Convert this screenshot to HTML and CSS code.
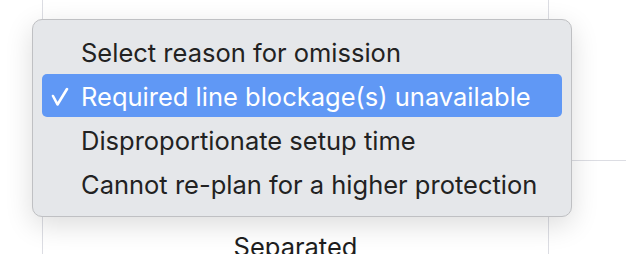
FILE: index.html
```html
<!DOCTYPE html>
<html lang="en">
<head>
  <meta charset="UTF-8">
  <title>Omission reason</title>
  <link rel="stylesheet" href="styles.css">
</head>
<body>
  <div class="table">
    <div class="col col-left"></div>
    <div class="col col-main">
      <div class="cell cell-top"></div>
      <div class="cell cell-label">Separated</div>
    </div>
    <div class="col col-right">
      <div class="cell cell-top"></div>
      <div class="cell"></div>
    </div>
  </div>

  <ul class="menu">
    <li class="option">Select reason for omission</li>
    <li class="option selected">
      <svg class="check" width="18" height="19" viewBox="0 0 18 19">
        <path d="M2 9 L6.5 17.5 L16 2" fill="none" stroke="#fff" stroke-width="2.6" stroke-linecap="round" stroke-linejoin="round"/>
      </svg>Required line blockage(s) unavailable</li>
    <li class="option">Disproportionate setup time</li>
    <li class="option">Cannot re-plan for a higher protection</li>
  </ul>
</body>
</html>
```

FILE: styles.css
```css
html, body {
  margin: 0;
  padding: 0;
  background: #fff;
  overflow: hidden;
}
body {
  font-family: Inter, "Noto Sans", sans-serif;
  color: #222;
  width: 626px;
  height: 254px;
  position: relative;
}
.table {
  display: flex;
  height: 254px;
}
.col-left {
  width: 42px;
  border-right: 1px solid #dcdde3;
}
.col-main {
  width: 505px;
  border-right: 1px solid #dcdde3;
}
.col-right {
  flex: 1;
}
.cell-top {
  height: 160px;
  border-bottom: 1px solid #dcdde3;
}
.cell-label {
  text-align: center;
  font-size: 25.5px;
  line-height: 30px;
  padding-top: 71px;
  color: #1e1e1e;
}
.menu {
  position: absolute;
  left: 32px;
  top: 19px;
  width: 520px;
  margin: 0;
  padding: 10px 9px;
  list-style: none;
  background: #e5e7ea;
  border: 1px solid #bfc0c3;
  border-radius: 10px;
  box-shadow: 0 8px 28px rgba(0, 0, 0, 0.14);
}
.option {
  position: relative;
  height: 43px;
  line-height: 45px;
  padding-left: 39px;
  font-size: 25.5px;
  color: #222;
  border-radius: 5px;
  margin-bottom: 1px;
  white-space: nowrap;
}
.option.selected {
  background: #6098f5;
  color: #fff;
}
.check {
  position: absolute;
  left: 9px;
  top: 13px;
}
```
